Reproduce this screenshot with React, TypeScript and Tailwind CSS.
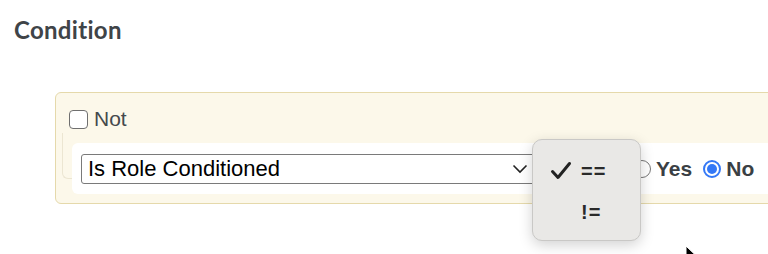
import React from 'react';

export default function App() {
  return (
    <div className="relative w-[768px] h-[254px] overflow-hidden bg-white font-['Liberation_Sans',Arial,sans-serif]">
      {/* Heading */}
      <h2 className="pl-[14px] pt-[16px] text-[24px] leading-7 font-bold text-[#3f4448] font-['Lato',sans-serif] tracking-[0.3px]">
        Condition
      </h2>

      {/* Condition panel */}
      <div className="relative mt-[48px] ml-[55px] w-[760px] h-[112px] rounded-l-[6px] border border-[#e5d9ab] bg-[#fcf8ea] pl-[13px] pt-[16px]">
        {/* faint nested group outline */}
        <div className="absolute left-[6px] top-[40px] w-[20px] h-[46px] rounded-bl-[6px] border-l border-b border-[#ece6d2]"></div>

        <label className="flex items-center gap-[6px] text-[21px] leading-5 text-[#45494d]">
          <span className="w-[19px] h-[19px] rounded-[4px] border-[1.5px] border-[#6f6f6f] bg-white"></span>
          <span>Not</span>
        </label>

        <div className="relative mt-[14px] ml-[3px] h-[51px] bg-white rounded-l-[6px] flex items-center pl-[9px]">
          <div className="w-[458px] h-[30px] border border-[#7a7a7a] rounded-[3px] flex items-center justify-between pl-[6px] pr-[6px] text-[22px] leading-6 text-black">
            <span>Is Role Conditioned</span>
            <svg width="16" height="10" viewBox="0 0 16 10" className="mr-[4px]">
              <path d="M1.5 1.5 L8 8 L14.5 1.5" fill="none" stroke="#222" strokeWidth="1.6" />
            </svg>
          </div>

          <div className="ml-[94px] flex items-center text-[21px] font-bold text-[#3a3f44]">
            <span className="w-[18px] h-[18px] rounded-full border-[1.5px] border-[#777] bg-white"></span>
            <span className="ml-[5px]">Yes</span>
            <span className="ml-[11px] w-[18px] h-[18px] rounded-full border-[2px] border-[#3478f6] bg-white flex items-center justify-center">
              <span className="w-[10px] h-[10px] rounded-full bg-[#3478f6]"></span>
            </span>
            <span className="ml-[5px]">No</span>
          </div>
        </div>
      </div>

      {/* Operator dropdown menu */}
      <div className="absolute left-[532px] top-[139px] w-[109px] h-[102px] rounded-[10px] border border-[#c9c8c6] bg-[#e9e8e6] shadow-[0_4px_14px_rgba(0,0,0,0.18)] text-[#2a2a2a] font-['Liberation_Sans',Arial,sans-serif]">
        <div className="flex items-center h-[20px] mt-[21px]">
          <svg width="22" height="20" viewBox="0 0 22 20" className="ml-[17px]">
            <path d="M2.5 10.5 L8 16.5 L19.5 2.5" fill="none" stroke="#222" strokeWidth="3" strokeLinecap="round" strokeLinejoin="round" />
          </svg>
          <span className="ml-[9px] text-[20px] font-bold tracking-[1px] leading-5">==</span>
        </div>
        <div className="mt-[21px] ml-[48px] text-[20px] font-bold leading-5 tracking-[1px]">!=</div>
      </div>

      {/* mouse cursor */}
      <svg width="14" height="20" viewBox="0 0 14 20" className="absolute left-[685px] top-[245px]">
        <path d="M1 1 L1 16 L4.5 12.5 L7 18 L9.5 17 L7 11.5 L12 11.5 Z" fill="#000" stroke="#fff" strokeWidth="1" />
      </svg>
    </div>
  );
}
